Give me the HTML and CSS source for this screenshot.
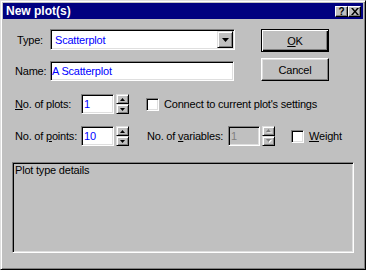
FILE: index.html
```html
<!DOCTYPE html>
<html lang="en">

<head>
    <meta charset="UTF-8">
    <title>New plot(s)</title>
    <link rel="stylesheet" href="styles.css">
</head>

<body>
    <div class="dialog">
        <div class="titlebar">
            <span class="title">New plot(s)</span>
            <div class="caption-btns">
                <span class="cap-btn help">?</span>
                <span class="cap-btn">
                    <svg width="8" height="7" viewBox="0 0 8 7">
                        <path d="M0 0h2l2 2.5 2-2.5h2l-3 3.5 3 3.5h-2l-2-2.5-2 2.5h-2l3-3.5z" fill="#000"/>
                    </svg>
                </span>
            </div>
        </div>

        <div class="content">
            <div class="top">
                <div class="form">
                    <div class="row">
                        <label class="lbl lbl-type">Type:</label>
                        <div class="sunken combo">
                            <span class="value">Scatterplot</span>
                            <span class="raised drop-btn">
                                <svg width="7" height="4" viewBox="0 0 7 4"><path d="M0 0h7l-3.5 4z" fill="#000"/></svg>
                            </span>
                        </div>
                    </div>
                    <div class="row">
                        <label class="lbl">Name:</label>
                        <div class="sunken text-field name-field">A Scatterplot</div>
                    </div>
                </div>
                <div class="buttons">
                    <button class="btn btn-default"><u>O</u>K</button>
                    <button class="btn">Cancel</button>
                </div>
            </div>

            <div class="row row-plots">
                <label class="lbl lbl-wide"><u>N</u>o. of plots:</label>
                <div class="sunken text-field num-field">1</div>
                <div class="spinner">
                    <span class="raised spin-btn"><svg width="5" height="3" viewBox="0 0 5 3"><path d="M2.5 0l2.5 3h-5z" fill="#000"/></svg></span>
                    <span class="raised spin-btn"><svg width="5" height="3" viewBox="0 0 5 3"><path d="M0 0h5l-2.5 3z" fill="#000"/></svg></span>
                </div>
                <span class="sunken checkbox check-connect"></span>
                <span class="check-label">Connect to current plot's settings</span>
            </div>

            <div class="row row-points">
                <label class="lbl lbl-wide">No. of <u>p</u>oints:</label>
                <div class="sunken text-field num-field">10</div>
                <div class="spinner">
                    <span class="raised spin-btn"><svg width="5" height="3" viewBox="0 0 5 3"><path d="M2.5 0l2.5 3h-5z" fill="#000"/></svg></span>
                    <span class="raised spin-btn"><svg width="5" height="3" viewBox="0 0 5 3"><path d="M0 0h5l-2.5 3z" fill="#000"/></svg></span>
                </div>
                <label class="lbl-vars">No. of <u>v</u>ariables:</label>
                <div class="sunken text-field num-field disabled">1</div>
                <div class="spinner">
                    <span class="raised spin-btn"><svg width="6" height="4" viewBox="0 0 6 4"><path d="M3 0l3 3h-6z" fill="#fff" transform="translate(1 1) scale(.84)"/><path d="M2.5 0l2.5 3h-5z" fill="#808080"/></svg></span>
                    <span class="raised spin-btn"><svg width="6" height="4" viewBox="0 0 6 4"><path d="M0 0h5l-2.5 3z" fill="#fff" transform="translate(1 1)"/><path d="M0 0h5l-2.5 3z" fill="#808080"/></svg></span>
                </div>
                <span class="sunken checkbox check-weight"></span>
                <span class="check-label"><u>W</u>eight</span>
            </div>

            <div class="sunken panel">Plot type details</div>
        </div>
    </div>
</body>

</html>
```

FILE: styles.css
```css
/* Base */
body {
    margin: 0;
    background-color: #c0c0c0;
    font-family: 'Liberation Sans', Arial, sans-serif;
    font-size: 11px;
    letter-spacing: -0.2px;
    color: #000;
}

/* Window frame */
.dialog {
    width: 366px;
    height: 270px;
    box-sizing: border-box;
    border: 1px solid;
    border-color: #dfdfdf #000 #000 #dfdfdf;
    box-shadow: inset 1px 1px #fff, inset -1px -1px #808080;
    padding: 2px;
    background-color: #c0c0c0;
    display: flex;
    flex-direction: column;
}

.titlebar {
    height: 16px;
    background-color: #000080;
    display: flex;
    align-items: center;
    justify-content: space-between;
    padding: 0 2px 0 3px;
}

.title {
    color: white;
    font-weight: bold;
    font-size: 12px;
    letter-spacing: 0;
}

.caption-btns {
    display: flex;
}

.cap-btn {
    width: 13px;
    height: 11px;
    box-sizing: border-box;
    background-color: #c0c0c0;
    border: 1px solid;
    border-color: #fff #000 #000 #fff;
    box-shadow: inset -1px -1px #808080;
    display: flex;
    align-items: center;
    justify-content: center;
}

.cap-btn.help {
    font-weight: bold;
    font-size: 10px;
    line-height: 9px;
    letter-spacing: 0;
}

/* Bevels */
.sunken {
    box-sizing: border-box;
    border: 1px solid;
    border-color: #808080 #fff #fff #808080;
    box-shadow: inset 1px 1px #000, inset -1px -1px #dfdfdf;
    padding: 1px;
}

.raised {
    box-sizing: border-box;
    background-color: #c0c0c0;
    border: 1px solid;
    border-color: #dfdfdf #000 #000 #dfdfdf;
    box-shadow: inset 1px 1px #fff, inset -1px -1px #808080;
}

/* Layout */
.content {
    flex: 1;
    padding-top: 10px;
    display: flex;
    flex-direction: column;
}

.top {
    display: flex;
}

.form {
    width: 232px;
    display: flex;
    flex-direction: column;
    gap: 11px;
}

.row {
    display: flex;
    align-items: center;
}

.lbl {
    box-sizing: border-box;
    width: 47px;
    padding-left: 12px;
}

.lbl-type {
    padding-left: 14px;
}

.lbl-wide {
    width: 78px;
}

/* Fields */
.text-field {
    background-color: white;
    color: #0000ff;
    height: 20px;
    line-height: 16px;
    white-space: nowrap;
}

.combo {
    width: 185px;
    height: 21px;
    background-color: white;
    display: flex;
    align-items: center;
}

.combo .value {
    color: #0000ff;
    padding-left: 3px;
}

.drop-btn {
    margin-left: auto;
    width: 16px;
    height: 17px;
    display: flex;
    align-items: center;
    justify-content: center;
}

.name-field {
    width: 184px;
}

.num-field {
    width: 33px;
    padding-left: 2px;
}

.num-field.disabled {
    width: 32px;
    background-color: #c0c0c0;
    color: #808080;
}

.spinner {
    width: 13px;
    height: 20px;
    margin-left: 2px;
    display: flex;
    flex-direction: column;
}

.spin-btn {
    height: 10px;
    display: flex;
    align-items: center;
    justify-content: center;
}

.checkbox {
    width: 13px;
    height: 13px;
    background-color: white;
}

.check-connect {
    margin-left: 17px;
}

.check-weight {
    margin-left: 16px;
}

.check-label {
    margin-left: 5px;
}

.row-plots {
    margin-top: 13px;
}

.row-points {
    margin-top: 12px;
}

.lbl-vars {
    width: 81px;
    margin-left: 18px;
}

/* Buttons */
.buttons {
    margin-left: 26px;
    display: flex;
    flex-direction: column;
    gap: 6px;
}

.btn {
    box-sizing: border-box;
    width: 68px;
    height: 23px;
    padding: 0;
    background-color: #c0c0c0;
    border: 1px solid;
    border-color: #fff #000 #000 #fff;
    box-shadow: inset -1px -1px #808080, inset 1px 1px #dfdfdf;
    font-family: 'Liberation Sans', Arial, sans-serif;
    font-size: 11px;
    letter-spacing: -0.2px;
    color: #000;
}

.btn-default {
    border-color: #000;
    box-shadow: inset 1px 1px #fff, inset -1px -1px #000, inset -2px -2px #808080;
}

/* Details panel */
.panel {
    height: 91px;
    margin: 16px 9px 0 9px;
    padding: 1px 2px;
    background-color: #c0c0c0;
    line-height: 13px;
}
```
